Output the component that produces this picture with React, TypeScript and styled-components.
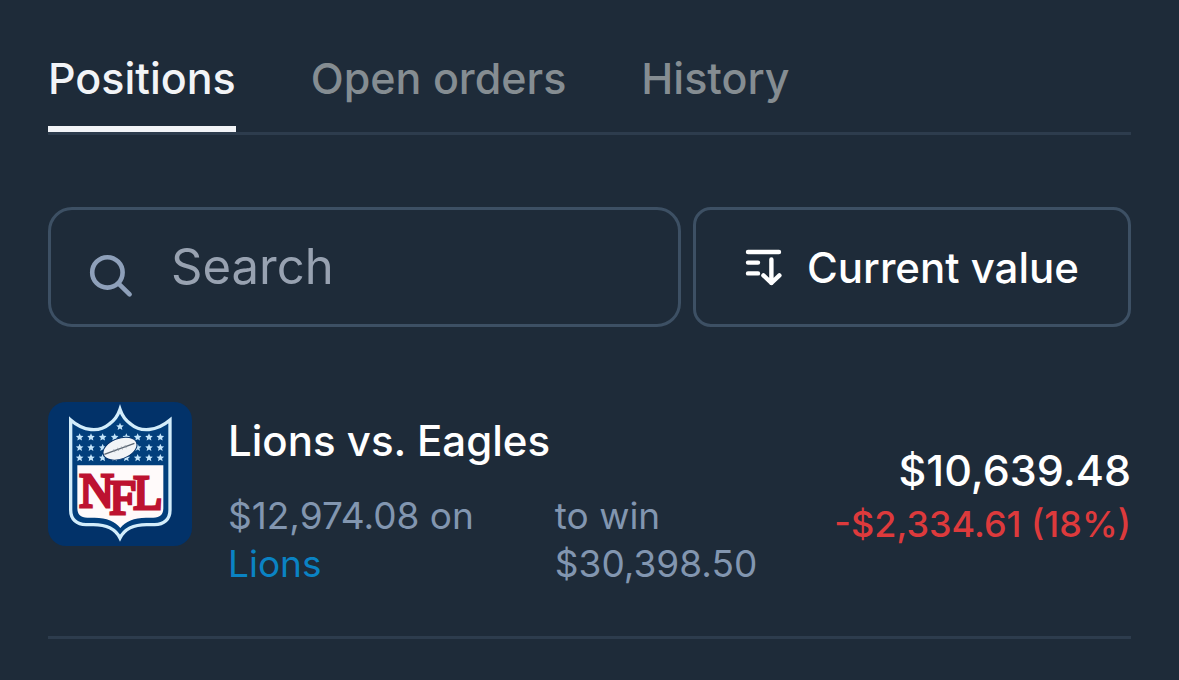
import React, { useState } from 'react';
import styled, { createGlobalStyle } from 'styled-components';

interface PositionI {
    title: string;
    stake: string;
    outcome: string;
    payout: string;
    value: string;
    change: string;
}

const tabs = ['Positions', 'Open orders', 'History'];

const positions: PositionI[] = [
    {
        title: 'Lions vs. Eagles',
        stake: '$12,974.08',
        outcome: 'Lions',
        payout: '$30,398.50',
        value: '$10,639.48',
        change: '-$2,334.61 (18%)',
    },
];

const App = () => {
    const [active, setActive] = useState(tabs[0]);
    const [query, setQuery] = useState('');

    return <Page>
        <GlobalStyle />
        <TabList role="tablist">
            {tabs.map(tab => (
                <Tab
                    key={tab}
                    role="tab"
                    aria-selected={tab === active}
                    $active={tab === active}
                    onClick={() => setActive(tab)}
                >
                    {tab}
                </Tab>
            ))}
        </TabList>
        <Toolbar>
            <SearchBox>
                <SearchIcon />
                <SearchInput
                    type="text"
                    aria-label="Search"
                    placeholder="Search"
                    value={query}
                    onChange={e => setQuery(e.target.value)}
                />
            </SearchBox>
            <SortButton type="button">
                <SortIcon />
                Current value
            </SortButton>
        </Toolbar>
        {positions.map(position => <Position key={position.title} position={position} />)}
    </Page>;
};

const Position = ({ position }: { position: PositionI }) => (
    <PositionRow>
        <LeagueLogo />
        <Details>
            <Title>{position.title}</Title>
            <Meta>
                <MetaText>
                    {position.stake} on
                    <br />
                    <OutcomeLink href="#outcome">{position.outcome}</OutcomeLink>
                </MetaText>
                <MetaText>
                    to win
                    <br />
                    {position.payout}
                </MetaText>
            </Meta>
        </Details>
        <Totals>
            <Value>{position.value}</Value>
            <Change>{position.change}</Change>
        </Totals>
    </PositionRow>
);

const SearchIcon = () => (
    <svg width="44" height="44" viewBox="0 0 44 44" fill="none" stroke="#8ea0ba" strokeWidth="4.6" strokeLinecap="round" aria-hidden="true">
        <circle cx="18.4" cy="18.4" r="15.2" />
        <path d="M29.6 29.6L40.6 40.4" />
    </svg>
);

const SortIcon = () => (
    <svg width="38" height="38" viewBox="0 0 38 38" fill="none" stroke="#fff" strokeWidth="4.4" strokeLinecap="round" strokeLinejoin="round" aria-hidden="true">
        <path d="M3 4H34M3 14.6H13M3 25.4H13M26.4 11.5V35M18.4 27.4L26.4 35L34.4 27.4" />
    </svg>
);

const star = (x: number, y: number) => {
    const points = Array.from({ length: 10 }, (_, i) => {
        const r = i % 2 ? 5.6 : 12;
        const a = -Math.PI / 2 + (i * Math.PI) / 5;
        return `${(x + r * Math.cos(a)).toFixed(1)},${(y + r * Math.sin(a)).toFixed(1)}`;
    });
    return <polygon key={`${x}-${y}`} points={points.join(' ')} fill="#c3e4fa" />;
};

const LeagueLogo = () => (
    <Logo viewBox="24 22 432 432" role="img" aria-label="NFL">
        <rect x="24" y="22" width="432" height="432" fill="#023269" />
        <path
            d="M92 76C130 110 178 114 208 88C226 76 234 62 240 44C246 62 254 76 272 88C302 114 350 110 390 76V346C390 374 372 390 344 390H320C284 390 254 402 240 430C226 402 196 390 160 390H138C110 390 92 374 92 346Z"
            fill="#023f7c"
            stroke="#d3edfb"
            strokeWidth="10"
        />
        <path d="M112 212H370V340C370 360 360 369 340 369H318C282 369 256 380 241 400C226 380 200 369 164 369H142C122 369 112 360 112 340Z" fill="#fffafa" />
        {star(240, 96)}
        {[128, 159, 190].map(y => [119, 153, 188, 224, 259, 293, 327, 361].map(x => star(x, y)))}
        <g transform="rotate(-20 240 162)">
            <ellipse cx="240" cy="162" rx="53" ry="31" fill="#f2f4f7" stroke="#06336a" strokeWidth="3" />
            <path d="M190 162H286" stroke="#5b6673" strokeWidth="4" />
            <path d="M222 157V167M234 157V167M246 157V167M258 157V167" stroke="#8b949f" strokeWidth="2" />
        </g>
        <LogoText x="118 208 280" y="338 358 342">NFL</LogoText>
    </Logo>
);

const GlobalStyle = createGlobalStyle`
    * {
        box-sizing: border-box;
    }
    body {
        margin: 0;
        background: #1e2b39;
        font-family: Inter, "Liberation Sans", sans-serif;
    }
    button, input {
        font-family: inherit;
    }
`;

const Page = styled.main`
    padding: 48px 48px 0;
`;

const TabList = styled.div`
    display: flex;
    gap: 75px;
    border-bottom: 3px solid #2d3c4d;
`;

const Tab = styled.button<{ $active: boolean }>`
    padding: 0 0 18px;
    border: 0;
    border-bottom: 6px solid ${props => props.$active ? '#f2f4f7' : 'transparent'};
    background: none;
    color: ${props => props.$active ? '#f2f4f7' : '#858d92'};
    font-size: 43px;
    font-weight: 500;
    line-height: 60px;
    cursor: pointer;
`;

const Toolbar = styled.div`
    display: flex;
    gap: 12px;
    margin-top: 72px;
`;

const SearchBox = styled.label`
    flex: 1;
    min-width: 0;
    display: flex;
    align-items: center;
    gap: 38px;
    height: 120px;
    padding: 0 38px;
    border: 3px solid #3d5064;
    border-radius: 24px;

    svg {
        flex: none;
        margin-top: 18px;
    }
`;

const SearchInput = styled.input`
    flex: 1;
    min-width: 0;
    padding: 0;
    border: 0;
    outline: 0;
    background: none;
    color: #fff;
    font-size: 49px;
    line-height: 60px;

    &::placeholder {
        color: #98a2b1;
        opacity: 1;
    }
`;

const SortButton = styled.button`
    display: flex;
    align-items: center;
    gap: 24px;
    height: 120px;
    padding: 0 49px;
    border: 3px solid #3d5064;
    border-radius: 18px;
    background: none;
    color: #fff;
    font-size: 42px;
    font-weight: 500;
    white-space: nowrap;
    cursor: pointer;
`;

const PositionRow = styled.article`
    display: flex;
    align-items: center;
    margin-top: 75px;
    padding-bottom: 48px;
    border-bottom: 3px solid #2d3c4d;
`;

const Logo = styled.svg`
    flex: none;
    align-self: flex-start;
    width: 144px;
    height: 144px;
    margin-right: 36px;
    border-radius: 18px;
`;

const LogoText = styled.text`
    fill: #bd1230;
    stroke: #bd1230;
    stroke-width: 9px;
    font-family: "Liberation Serif", serif;
    font-size: 144px;
`;

const Details = styled.div`
    flex: 1;
    padding-top: 9px;
`;

const Title = styled.h2`
    margin: 0 0 21px;
    color: #fff;
    font-size: 42px;
    font-weight: 500;
    line-height: 60px;
`;

const Meta = styled.div`
    display: grid;
    grid-template-columns: 1fr auto;
`;

const MetaText = styled.p`
    margin: 0;
    color: #8296b0;
    font-size: 37px;
    line-height: 48px;
    white-space: nowrap;
`;

const OutcomeLink = styled.a`
    color: #0a83c4;
    text-decoration: none;
`;

const Totals = styled.div`
    margin-left: 77px;
    padding-top: 3px;
    text-align: right;
    white-space: nowrap;
`;

const Value = styled.div`
    color: #fff;
    font-size: 43px;
    font-weight: 500;
    line-height: 54px;
`;

const Change = styled.div`
    color: #dd3a3c;
    font-size: 36px;
    font-weight: 500;
    line-height: 54px;
`;

export default App;
